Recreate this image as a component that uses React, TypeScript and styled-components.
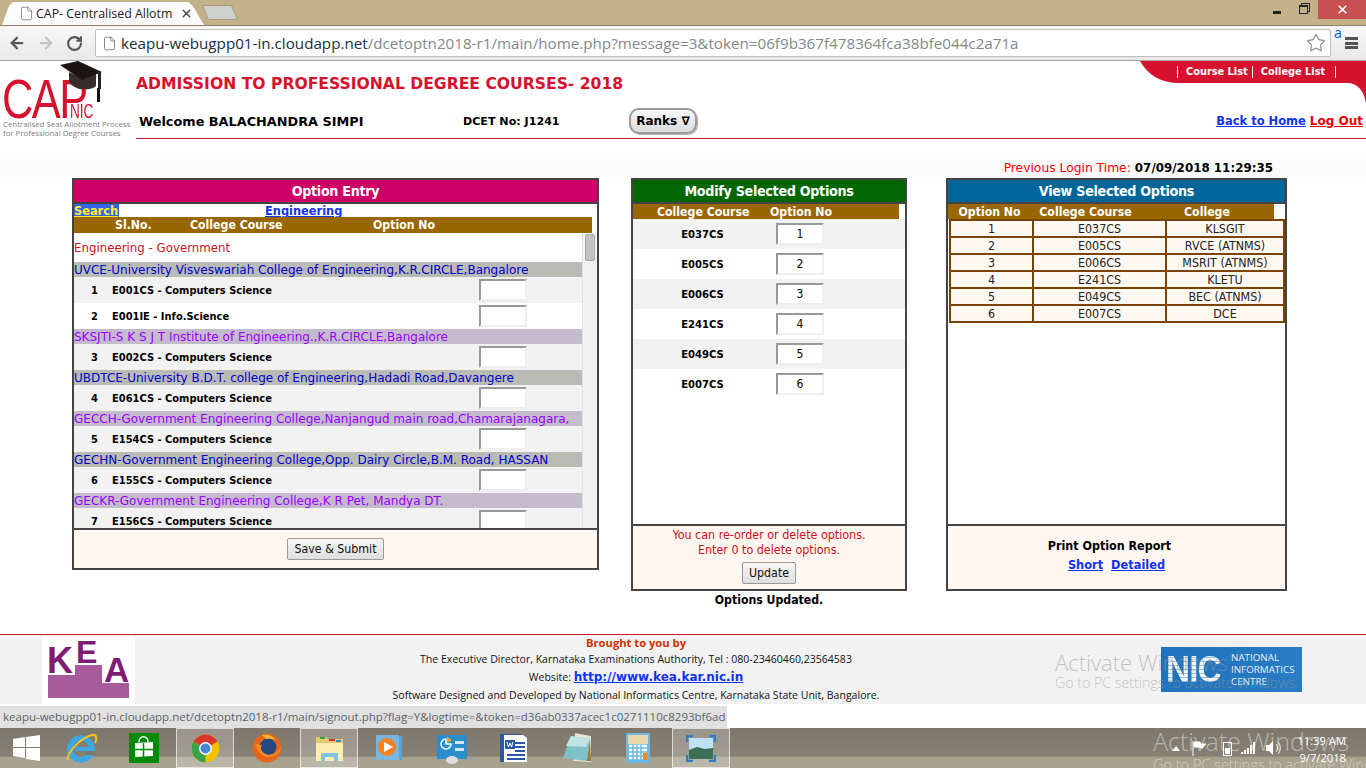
import React from 'react';
import styled, { createGlobalStyle } from 'styled-components';
import { ArrowLeft, ArrowRight, File, RotateCw, Star, X } from 'lucide-react';

const VERDANA = '"DejaVu Sans", Verdana, sans-serif';
const TAHOMA = '"DejaVu Sans Condensed", "DejaVu Sans", sans-serif';
const SEGOE = '"Open Sans", "Noto Sans", sans-serif';
const BROWN = '#996600';

const GlobalStyle = createGlobalStyle`
  html, body { margin: 0; padding: 0; background: #fff; }
  body { font-family: ${VERDANA}; overflow: hidden; }
  * { box-sizing: border-box; }
`;

const Screen = styled.div`
  width: 1366px;
  height: 768px;
  display: flex;
  flex-direction: column;
  overflow: hidden;
  position: relative;
`;

/* browser chrome */
const TabStrip = styled.div`
  height: 25px;
  background: #c2b189;
  display: flex;
  align-items: flex-end;
  padding-left: 2px;
  position: relative;
`;
const ActiveTab = styled.div`
  width: 202px;
  height: 23px;
  background: linear-gradient(#fff, #f8f8f8);
  clip-path: polygon(0 100%, 7px 4px, 11px 0, 186px 0, 191px 4px, 202px 100%);
  display: flex;
  align-items: center;
  gap: 2px;
  padding-left: 17px;
  font: 12.4px ${SEGOE};
  color: #222;
`;
const TabTitle = styled.span`
  width: 136px;
  white-space: nowrap;
  overflow: hidden;
  color: #1c1c1c;
  margin-right: 6px;
`;
const NewTab = styled.div`
  width: 30px;
  height: 15px;
  margin: 0 0 5px 1px;
  background: #ced0cc;
  border: 1px solid #a89c7e;
  border-radius: 2px;
  transform: skewX(22deg);
`;
const WindowControls = styled.div`
  margin-left: auto;
  align-self: flex-start;
  display: flex;
  align-items: center;
  height: 19px;
`;
const Minimize = styled.div`
  width: 8px;
  height: 3px;
  background: #222;
  margin: 6px 18px 0 0;
`;
const Restore = styled.div`
  width: 9px;
  height: 9px;
  border: 1px solid #222;
  border-top-width: 2px;
  margin: 0 10px 0 0;
  box-shadow: 2px -2px 0 -1px #c2b189, 2px -2px 0 0 #222;
`;
const CloseBox = styled.div`
  width: 48px;
  height: 19px;
  background: #c75050;
  color: #fff;
  display: flex;
  align-items: center;
  justify-content: center;
`;
const Toolbar = styled.div`
  height: 36px;
  background: linear-gradient(#f7f7f7, #e9e9e9);
  border-top: 1px solid #8f8367;
  border-bottom: 1px solid #a8a8a8;
  display: flex;
  align-items: center;
  padding-left: 2px;
`;
const NavButton = styled.div<{ $off?: boolean }>`
  width: 29px;
  display: flex;
  justify-content: center;
  color: ${p => (p.$off ? '#c4c4c4' : '#555')};
`;
const Omnibox = styled.div`
  width: 1236px;
  height: 28px;
  margin-left: 6px;
  background: #fff;
  border: 1px solid #bdbdbd;
  border-radius: 2px;
  display: flex;
  align-items: center;
  padding: 0 4px 0 6px;
  gap: 4px;
  font: 15.2px ${SEGOE};
  color: #83898c;
  white-space: nowrap;
`;
const Host = styled.span`
  color: #20303a;
`;
const UrlText = styled.span`
  flex: 1;
`;
const MenuWrap = styled.div`
  position: relative;
  flex: 1;
  height: 100%;
`;
const ExtensionA = styled.span`
  position: absolute;
  left: 3px;
  top: -3px;
  font: 14px ${SEGOE};
  color: #2255dd;
`;
const MenuBars = styled.div`
  position: absolute;
  left: 14px;
  top: 11px;
  width: 13px;
  height: 12px;
  border-top: 3px solid #555;
  border-bottom: 3px solid #555;
  &::after {
    content: '';
    display: block;
    height: 3px;
    margin-top: 1.5px;
    background: #555;
  }
`;

/* page header */
const Page = styled.div`
  flex: 1;
  min-height: 0;
  display: flex;
  flex-direction: column;
  position: relative;
`;
const PageHeader = styled.header`
  height: 79px;
  display: flex;
  position: relative;
  flex: none;
`;
const Logo = styled.div`
  width: 136px;
  position: relative;
  flex: none;
`;
const LogoCap = styled.span`
  position: absolute;
  left: 2px;
  top: 9px;
  font: 55px/58px "Liberation Sans", sans-serif;
  color: #d6122e;
  transform: scaleX(0.79);
  transform-origin: left top;
  letter-spacing: -2px;
`;
const LogoNic = styled.span`
  position: absolute;
  left: 70px;
  top: 40px;
  font: 20px/20px "Liberation Sans", sans-serif;
  color: #d6122e;
  transform: scaleX(0.68);
  transform-origin: left top;
`;
const LogoLine = styled.div<{ $top: number }>`
  position: absolute;
  left: 3px;
  font: 7.85px/9px ${SEGOE};
  color: #808080;
  white-space: nowrap;
  top: ${p => p.$top}px;
`;
const LogoHat = styled.svg`
  position: absolute;
  left: 58px;
  top: 0;
`;
const HeaderMain = styled.div`
  flex: 1;
  display: flex;
  flex-direction: column;
  border-bottom: 1px solid #d6122e;
  margin-bottom: 1px;
`;
const PageTitle = styled.h1`
  margin: 0;
  padding-top: 13px;
  height: 45px;
  font: bold 15.6px/20px ${VERDANA};
  color: #d6122e;
  white-space: nowrap;
`;
const InfoRow = styled.div`
  display: flex;
  align-items: center;
  height: 30px;
  padding-left: 3px;
`;
const Welcome = styled.div`
  width: 324px;
  font: bold 12.85px ${VERDANA};
  color: #000;
  white-space: nowrap;
`;
const Dcet = styled.div`
  width: 166px;
  font: bold 11.1px ${VERDANA};
  color: #000;
  white-space: nowrap;
`;
const RanksButton = styled.button`
  width: 68px;
  height: 26px;
  border: 2px solid #999;
  border-radius: 10px;
  background: linear-gradient(#f8f8f8, #dcdcdc);
  font: bold 12px ${VERDANA};
  color: #000;
  padding: 0;
  box-shadow: 1px 1px 1px #aaa;
`;
const RightLinks = styled.div`
  margin-left: auto;
  padding-right: 3px;
  display: flex;
  align-items: baseline;
  gap: 4px;
`;
const HomeLink = styled.a`
  font: bold 11.5px ${VERDANA};
  color: #1133ee;
  text-decoration: underline;
`;
const LogoutLink = styled.a`
  font: bold 12px ${VERDANA};
  color: #ee0000;
  text-decoration: underline;
`;
const RedTab = styled.div`
  position: absolute;
  right: 0;
  top: 0;
  width: 226px;
  height: 42px;
  display: flex;
  align-items: flex-start;
  padding: 5px 0 0 37px;
`;
const RedTabShape = styled.svg`
  position: absolute;
  inset: 0;
`;
const RedTabLink = styled.span`
  position: relative;
  height: 12px;
  padding: 0 4px 0 8px;
  border-left: 1px solid #fff;
  font: bold 10.9px/12px ${TAHOMA};
  color: #fff;
  white-space: nowrap;
  &:last-child {
    border-right: 1px solid #fff;
    padding-right: 10px;
  }
`;

const LoginBand = styled.div`
  margin-top: 19px;
  height: 18px;
  flex: none;
  background: #fbfbfb;
  display: flex;
  justify-content: flex-end;
  align-items: center;
  padding: 0 93px 1px 0;
  gap: 4px;
  font: 12.3px ${VERDANA};
  color: #f00;
  white-space: nowrap;
`;
const LoginTime = styled.b`
  color: #000;
  font-size: 11.9px;
`;

/* panels */
const PanelRow = styled.main`
  flex: none;
  display: flex;
  align-items: flex-start;
  padding: 1px 0 0 72px;
  height: 457px;
`;
const PanelColumn = styled.div<{ $width: number; $gap: number }>`
  width: ${p => p.$width}px;
  margin-right: ${p => p.$gap}px;
  flex: none;
  display: flex;
  flex-direction: column;
`;
const Panel = styled.section<{ $height: number }>`
  height: ${p => p.$height}px;
  border: 2px solid #444;
  display: flex;
  flex-direction: column;
  background: #fff;
`;
const PanelTitle = styled.div<{ $color: string }>`
  height: 24px;
  flex: none;
  background: ${p => p.$color};
  border-bottom: 2px solid #444;
  color: #fff;
  text-align: center;
  font: bold 14.2px/23px ${TAHOMA};
  letter-spacing: -0.3px;
`;
const TabLinks = styled.div`
  height: 13px;
  flex: none;
  display: flex;
  align-items: flex-start;
  gap: 146px;
  font: bold 11.4px/14px ${VERDANA};
`;
const SearchLink = styled.a`
  width: 45px;
  height: 13px;
  background: #3366ee;
  color: #ffee22;
  text-decoration: underline;
`;
const CategoryLink = styled.a`
  color: #1133ee;
  text-decoration: underline;
`;
const HeadRow = styled.div<{ $columns: string; $pad: number; $right: number; $height: number }>`
  flex: none;
  height: ${p => p.$height}px;
  margin-right: ${p => p.$right}px;
  background: ${BROWN};
  color: #fff;
  display: grid;
  grid-template-columns: ${p => p.$columns};
  padding-left: ${p => p.$pad}px;
  font: bold 12.2px/${p => p.$height + 1}px ${TAHOMA};
  white-space: nowrap;
`;
const HeadCenter = styled.span`
  text-align: center;
`;
const ListArea = styled.div`
  flex: 1;
  min-height: 0;
  display: flex;
`;
const ListScroll = styled.div`
  width: 508px;
  overflow: hidden;
`;
const Scrollbar = styled.div`
  width: 15px;
  background: #f1f1f1;
  border-left: 1px solid #e2e2e2;
  padding: 1px 2px;
`;
const ScrollThumb = styled.div`
  height: 27px;
  background: #c4c4c4;
  border: 1px solid #aaa;
  border-radius: 2px;
`;
const CategoryTitle = styled.div`
  height: 29px;
  font: 11.8px/31px ${VERDANA};
  color: #cc1122;
`;
const CollegeRow = styled.div<{ $alt: boolean }>`
  height: 15px;
  background: ${p => (p.$alt ? '#c4bccc' : '#bbbbb6')};
  color: ${p => (p.$alt ? '#9900ff' : '#0000cc')};
  font: 12px/17px ${VERDANA};
  white-space: nowrap;
  overflow: hidden;
`;
const CourseRow = styled.div<{ $alt: boolean }>`
  height: 26px;
  background: ${p => (p.$alt ? '#fff' : '#f2f2f2')};
  display: grid;
  grid-template-columns: 38px 367px 48px;
  align-items: center;
  font: bold 11px ${TAHOMA};
  color: #000;
`;
const CourseNumber = styled.span`
  text-align: right;
  padding-right: 14px;
`;
const OptionInput = styled.input`
  width: 48px;
  height: 22px;
  padding: 0;
  border-style: solid;
  border-width: 2px;
  border-color: #999 #eee #eee #999;
  background: #fff;
  text-align: center;
  font: 12px ${TAHOMA};
  color: #000;
  outline: none;
`;
const PanelFooter = styled.div<{ $height: number }>`
  height: ${p => p.$height}px;
  flex: none;
  border-top: 2px solid #444;
  background: #fff7f0;
  display: flex;
  flex-direction: column;
  align-items: center;
`;
const SubmitButton = styled.button<{ $top: number }>`
  margin-top: ${p => p.$top}px;
  height: 22px;
  padding: 0 6px;
  border: 1px solid #999;
  border-radius: 2px;
  background: linear-gradient(#f6f6f6, #dedede);
  font: 12.3px ${TAHOMA};
  color: #111;
`;
const ModifyRow = styled.div<{ $alt: boolean }>`
  height: 30px;
  background: ${p => (p.$alt ? '#fff' : '#f2f2f2')};
  display: grid;
  grid-template-columns: 143px 48px;
  align-items: center;
  font: bold 11.2px ${TAHOMA};
  color: #000;
`;
const ModifyCode = styled.span`
  text-align: center;
  padding-right: 4px;
`;
const HelpText = styled.div`
  margin-top: 1px;
  text-align: center;
  font: 12.4px/15px ${TAHOMA};
  color: #cc1122;
`;
const UpdatedNote = styled.div`
  margin-top: 1px;
  text-align: center;
  font: bold 12.2px/16px ${TAHOMA};
  color: #000;
`;
const ViewTable = styled.div`
  margin: 0 0 0 1px;
  padding: 2px;
  display: grid;
  grid-template-columns: 81px 131px 116px;
  gap: 2px;
  background: #7a4400;
  flex: none;
  width: 336px;
`;
const ViewCell = styled.div`
  height: 15px;
  background: #fff9f2;
  text-align: center;
  font: 12.4px/15px ${TAHOMA};
  color: #222;
`;
const Spacer = styled.div`
  flex: 1;
`;
const PrintTitle = styled.div`
  margin: 12px 14px 0 0;
  font: bold 12.4px/16px ${TAHOMA};
  color: #000;
`;
const PrintLinks = styled.div`
  margin-top: 3px;
  display: flex;
  gap: 8px;
  font: bold 11.4px/16px ${VERDANA};
`;

/* footer */
const PageFooter = styled.footer`
  height: 70px;
  flex: none;
  border-top: 1px solid #d6122e;
  background: #f2f2f2;
  display: grid;
  grid-template-columns: 135px 1002px 229px;
  position: relative;
`;
const KeaLogo = styled.div`
  margin: 2px 0 0 42px;
  width: 93px;
  height: 67px;
  background: #fff;
  position: relative;
  overflow: hidden;
`;
const KeaLetter = styled.span<{ $left: number; $top: number; $size: number }>`
  position: absolute;
  left: ${p => p.$left}px;
  top: ${p => p.$top}px;
  font: bold ${p => p.$size}px/${p => p.$size}px "Liberation Sans", sans-serif;
  color: #7f1d75;
`;
const KeaSteps = styled.svg`
  position: absolute;
  left: 6px;
  top: 28px;
`;
const FooterText = styled.div`
  text-align: center;
  font: 10.55px/18.2px ${SEGOE};
  color: #111;
  white-space: nowrap;
`;
const BroughtBy = styled.div`
  font: bold 11.2px/15px ${SEGOE};
  color: #cc3300;
`;
const FooterLink = styled.a`
  font: bold 12px ${VERDANA};
  color: #1133ee;
  text-decoration: underline;
`;
const NicLogo = styled.div`
  margin: 12px 0 0 24px;
  width: 141px;
  height: 45px;
  background: linear-gradient(100deg, #1f72bb, #2a7cc4);
  display: flex;
  align-items: center;
  padding-left: 5px;
`;
const NicMark = styled.span`
  flex: none;
  width: 65px;
  font: 900 37px/40px "Liberation Sans", sans-serif;
  letter-spacing: -1px;
  background: repeating-linear-gradient(#f2f5f8 0 3px, #9fc2e2 3px 4px);
  -webkit-background-clip: text;
  background-clip: text;
  color: transparent;
  transform: scaleX(0.9);
  transform-origin: left center;
`;
const NicName = styled.span`
  font: 9.8px/12px ${SEGOE};
  color: #e8f0f8;
  white-space: nowrap;
`;
const Watermark = styled.div`
  position: absolute;
  left: 1055px;
  top: 13px;
  color: rgba(150, 150, 150, 0.55);
  font: 300 22px/28px ${SEGOE};
  white-space: nowrap;
  pointer-events: none;
`;
const WatermarkSub = styled.div`
  font-size: 14.2px;
  line-height: 18px;
  margin-top: -2px;
`;
const StatusSpace = styled.div`
  height: 24px;
  flex: none;
  background: #fff;
  padding-top: 2px;
`;
const StatusBubble = styled.div`
  width: 727px;
  height: 22px;
  background: #e1e1e1;
  padding-left: 3px;
  font: 11.5px/22px ${SEGOE};
  color: #59636a;
  white-space: nowrap;
  overflow: hidden;
`;

/* taskbar */
const Taskbar = styled.div`
  height: 40px;
  flex: none;
  background: linear-gradient(#7d786b 0, #868174 70%, #a7a28f 74%, #a9a491 100%);
  display: flex;
  align-items: stretch;
  position: relative;
  overflow: hidden;
`;
const TaskSlot = styled.div<{ $active?: boolean; $width: number; $before?: number }>`
  width: ${p => p.$width}px;
  margin-left: ${p => p.$before ?? 0}px;
  flex: none;
  display: flex;
  align-items: center;
  justify-content: center;
  ${p => p.$active && 'background: rgba(255,255,255,0.22); border: 1px solid rgba(255,255,255,0.65);'}
`;
const TaskWatermark = styled.div`
  position: absolute;
  left: 1153px;
  top: -1px;
  font: 300 25px/28px ${SEGOE};
  color: rgba(255, 255, 255, 0.45);
  white-space: nowrap;
`;
const WatermarkSmall = styled.div`
  font-size: 14.5px;
  line-height: 18px;
  margin-top: 1px;
`;
const Tray = styled.div`
  position: absolute;
  left: 1172px;
  top: 6px;
  height: 28px;
  display: flex;
  align-items: center;
`;
const Clock = styled.div`
  position: absolute;
  right: 20px;
  top: 5px;
  text-align: right;
  font: 11.2px/16.5px ${SEGOE};
  color: #fff;
`;
const TrayIcon = styled.svg<{ $after: number }>`
  margin-right: ${p => p.$after}px;
  flex: none;
`;

const courses: Array<{ college?: string; number: number; course: string }> = [
  { college: 'UVCE-University Visveswariah College of Engineering,K.R.CIRCLE,Bangalore', number: 1, course: 'E001CS - Computers Science' },
  { number: 2, course: 'E001IE - Info.Science' },
  { college: 'SKSJTI-S K S J T Institute of Engineering.,K.R.CIRCLE,Bangalore', number: 3, course: 'E002CS - Computers Science' },
  { college: 'UBDTCE-University B.D.T. college of Engineering,Hadadi Road,Davangere', number: 4, course: 'E061CS - Computers Science' },
  { college: 'GECCH-Government Engineering College,Nanjangud main road,Chamarajanagara,', number: 5, course: 'E154CS - Computers Science' },
  { college: 'GECHN-Government Engineering College,Opp. Dairy Circle,B.M. Road, HASSAN', number: 6, course: 'E155CS - Computers Science' },
  { college: 'GECKR-Government Engineering College,K R Pet, Mandya DT.', number: 7, course: 'E156CS - Computers Science' },
];

const selected = [
  ['E037CS', 'KLSGIT'],
  ['E005CS', 'RVCE (ATNMS)'],
  ['E006CS', 'MSRIT (ATNMS)'],
  ['E241CS', 'KLETU'],
  ['E049CS', 'BEC (ATNMS)'],
  ['E007CS', 'DCE'],
];

const OptionEntry: React.FC = () => {
  let collegeIndex = -1;
  return (
    <Panel $height={392}>
      <PanelTitle $color="#cc0066">Option Entry</PanelTitle>
      <TabLinks>
        <SearchLink>Search</SearchLink>
        <CategoryLink>Engineering</CategoryLink>
      </TabLinks>
      <HeadRow $columns="75px 183px auto" $pad={41} $right={5} $height={16}>
        <span>Sl.No.</span>
        <span>College Course</span>
        <span>Option No</span>
      </HeadRow>
      <ListArea>
        <ListScroll>
          <CategoryTitle>Engineering - Government</CategoryTitle>
          {courses.map(row => {
            if (row.college) collegeIndex++;
            return (
              <React.Fragment key={row.number}>
                {row.college ? <CollegeRow $alt={collegeIndex % 2 === 1}>{row.college}</CollegeRow> : null}
                <CourseRow $alt={row.number === 2}>
                  <CourseNumber>{row.number}</CourseNumber>
                  <span>{row.course}</span>
                  <OptionInput readOnly />
                </CourseRow>
              </React.Fragment>
            );
          })}
        </ListScroll>
        <Scrollbar><ScrollThumb /></Scrollbar>
      </ListArea>
      <PanelFooter $height={40}>
        <SubmitButton $top={8}>Save &amp; Submit</SubmitButton>
      </PanelFooter>
    </Panel>
  );
};

const ModifyOptions: React.FC = () => (
  <>
    <Panel $height={413}>
      <PanelTitle $color="#006600">Modify Selected Options</PanelTitle>
      <HeadRow $columns="113px auto" $pad={24} $right={6} $height={15}>
        <span>College Course</span>
        <span>Option No</span>
      </HeadRow>
      {selected.map(([code], i) => (
        <ModifyRow key={code} $alt={i % 2 === 1}>
          <ModifyCode>{code}</ModifyCode>
          <OptionInput readOnly value={i + 1} />
        </ModifyRow>
      ))}
      <Spacer />
      <PanelFooter $height={65}>
        <HelpText>You can re-order or delete options.<br />Enter 0 to delete options.</HelpText>
        <SubmitButton $top={5}>Update</SubmitButton>
      </PanelFooter>
    </Panel>
    <UpdatedNote>Options Updated.</UpdatedNote>
  </>
);

const ViewOptions: React.FC = () => (
  <Panel $height={413}>
    <PanelTitle $color="#006699">View Selected Options</PanelTitle>
    <HeadRow $columns="83px 109px 134px" $pad={0} $right={11} $height={15}>
      <HeadCenter>Option No</HeadCenter>
      <HeadCenter>College Course</HeadCenter>
      <HeadCenter>College</HeadCenter>
    </HeadRow>
    <ViewTable>
      {selected.map(([code, college], i) => (
        <React.Fragment key={code}>
          <ViewCell>{i + 1}</ViewCell>
          <ViewCell>{code}</ViewCell>
          <ViewCell>{college}</ViewCell>
        </React.Fragment>
      ))}
    </ViewTable>
    <Spacer />
    <PanelFooter $height={65}>
      <PrintTitle>Print Option Report</PrintTitle>
      <PrintLinks>
        <CategoryLink>Short</CategoryLink>
        <CategoryLink>Detailed</CategoryLink>
      </PrintLinks>
    </PanelFooter>
  </Panel>
);

const WindowsIcon = () => (
  <svg width="27" height="26" viewBox="0 0 27 26">
    <path d="M0 4l12-2v10H0zM13 2l14-2v12H13zM0 13h12v10L0 21zM13 13h14v13l-14-2z" fill="#fff" />
  </svg>
);
const IeIcon = () => (
  <svg width="32" height="32" viewBox="0 0 32 32">
    <circle cx="15" cy="17" r="11" fill="none" stroke="#3aa8e6" strokeWidth="5.5" />
    <rect x="9" y="15" width="14" height="4" fill="#3aa8e6" />
    <rect x="20" y="19" width="9" height="4" fill="#7d786b" />
    <path d="M2 28C0 22 14 6 26 3c5-1 5 4 3 8" fill="none" stroke="#f0c419" strokeWidth="2" />
  </svg>
);
const StoreIcon = () => (
  <svg width="30" height="30" viewBox="0 0 30 30">
    <rect width="30" height="30" fill="#008a00" />
    <path d="M6 10l18-1v14l-18 1z" fill="#fff" />
    <path d="M10 9c0-7 9-7 9 0" fill="none" stroke="#fff" strokeWidth="1.5" />
    <path d="M14.5 10v14M6 16.5h18" stroke="#008a00" strokeWidth="1.5" />
  </svg>
);
const ChromeIcon = () => (
  <svg width="29" height="29" viewBox="0 0 29 29">
    <circle cx="14.5" cy="14.5" r="14" fill="#f2c200" />
    <path d="M14.5 14.5L2.38 7.5A14 14 0 0 1 26.62 7.5z" fill="#d9362b" />
    <path d="M14.5 14.5V28.5A14 14 0 0 1 2.38 7.5z" fill="#3ba14a" />
    <circle cx="14.5" cy="14.5" r="6.5" fill="#fff" />
    <circle cx="14.5" cy="14.5" r="5" fill="#4a86d8" />
  </svg>
);
const FirefoxIcon = () => (
  <svg width="30" height="30" viewBox="0 0 30 30">
    <circle cx="15" cy="15" r="14.5" fill="#e8641b" />
    <circle cx="16" cy="14" r="8.5" fill="#27477f" />
    <path d="M3 10c2 12 12 17 21 12 4-2 5-7 5-9-3 8-11 11-17 7-3-2-4-5-2-8-3 0-5-1-7-2z" fill="#f08a24" />
    <path d="M10 2c5-1 11 0 14 6-3-3-7-3-10-2z" fill="#f5b335" />
  </svg>
);
const FolderIcon = () => (
  <svg width="29" height="29" viewBox="0 0 29 29">
    <path d="M1 3h10l2 2h15v22H1z" fill="#e6c870" />
    <rect x="5" y="3" width="5" height="2" fill="#3ba14a" />
    <rect x="14" y="5" width="6" height="2" fill="#c53b2a" />
    <rect x="21" y="6" width="5" height="2" fill="#3a86d0" />
    <path d="M1 9h27v18H1z" fill="#fbeeb0" />
    <path d="M6 27v-8h17v8h-4v-4H10v4z" fill="#7fc4e8" />
  </svg>
);
const MediaIcon = () => (
  <svg width="28" height="28" viewBox="0 0 28 28">
    <rect x="4" y="2" width="23" height="24" fill="#5aa3d8" />
    <rect x="1" y="1" width="23" height="25" fill="#7ab5de" />
    <circle cx="12" cy="13" r="9" fill="#f58220" />
    <path d="M9 8l9 5-9 5z" fill="#fff" />
  </svg>
);
const PanelIcon = () => (
  <svg width="32" height="32" viewBox="0 0 32 32">
    <rect x="1" y="3" width="30" height="24" fill="#2a8ecb" />
    <path d="M10 7a5 5 0 1 0 5 5h-5z" fill="none" stroke="#fff" strokeWidth="1.5" />
    <path d="M11 5l5 3-5 3z" fill="#f5a623" />
    <rect x="19" y="9" width="9" height="3" fill="#cfe6f5" />
    <rect x="19" y="16" width="9" height="3" fill="#cfe6f5" />
    <ellipse cx="16" cy="28" rx="6" ry="4" fill="#ddd" />
  </svg>
);
const WordIcon = () => (
  <svg width="32" height="32" viewBox="0 0 32 32">
    <path d="M3 2h22v28H3z" fill="#2c56a8" />
    <path d="M7 3h19l4 3v24H7z" fill="#fff" />
    <path d="M18 11h10M18 15h10M18 19h10M10 23h18M10 27h18" stroke="#2c56a8" strokeWidth="2" />
    <path d="M8 8h10v9H8z" fill="#2c56a8" />
    <path d="M10 10l1.5 5 1.5-4 1.5 4 1.5-5" fill="none" stroke="#fff" strokeWidth="1" />
  </svg>
);
const NotepadIcon = () => (
  <svg width="32" height="32" viewBox="0 0 32 32">
    <path d="M14 1l16 3 0 26-18-1z" fill="#e4e4d8" />
    <path d="M10 4l19 3-3 22L2 26z" fill="#7fc1c9" />
    <path d="M29 7l1 22-4 0z" fill="#9a7a3a" />
    <path d="M10 4l19 3-4 8L5 14z" fill="#bfe2e2" />
  </svg>
);
const CalcIcon = () => (
  <svg width="24" height="30" viewBox="0 0 24 30">
    <rect width="24" height="30" rx="1" fill="#6fb6e0" />
    <rect x="2" y="2" width="20" height="9" fill="#e8d8a8" />
    <path d="M3 13h18M3 17h18M3 21h18M3 25h18" stroke="#fff" strokeWidth="2.5" />
    <path d="M7 12v15M11 12v15M15 12v15" stroke="#6fb6e0" strokeWidth="1.5" />
    <rect x="17" y="20" width="4" height="7" fill="#f08a24" />
  </svg>
);
const PhotoIcon = () => (
  <svg width="30" height="27" viewBox="0 0 30 27">
    <rect x="3" y="3" width="24" height="21" fill="#bfe0f5" />
    <path d="M3 15l8-3 8 2 8-1v11H3z" fill="#3c6e58" />
    <path d="M1 7V1h6M23 1h6v6M29 20v6h-6M7 26H1v-6" fill="none" stroke="#2f7cc6" strokeWidth="2.5" />
  </svg>
);

const App: React.FC = () => (
  <Screen>
    <GlobalStyle />
    <TabStrip>
      <ActiveTab>
        <File size={15} color="#888" strokeWidth={1.4} />
        <TabTitle>CAP- Centralised Allotment</TabTitle>
        <X size={13} color="#555" strokeWidth={3} />
      </ActiveTab>
      <NewTab />
      <WindowControls>
        <Minimize />
        <Restore />
        <CloseBox><X size={13} strokeWidth={3} /></CloseBox>
      </WindowControls>
    </TabStrip>
    <Toolbar>
      <NavButton><ArrowLeft size={18} strokeWidth={3} /></NavButton>
      <NavButton $off><ArrowRight size={18} strokeWidth={3} /></NavButton>
      <NavButton><RotateCw size={17} strokeWidth={3} /></NavButton>
      <Omnibox>
        <File size={15} color="#777" strokeWidth={1.4} />
        <UrlText>
          <Host>keapu-webugpp01-in.cloudapp.net</Host>/dcetoptn2018-r1/main/home.php?message=3&amp;token=06f9b367f478364fca38bfe044c2a71a
        </UrlText>
        <Star size={20} color="#8f8f8f" strokeWidth={1.5} />
      </Omnibox>
      <MenuWrap>
        <ExtensionA>a</ExtensionA>
        <MenuBars />
      </MenuWrap>
    </Toolbar>
    <Page>
      <PageHeader>
        <Logo>
          <LogoCap>CAP</LogoCap>
          <LogoNic>NIC</LogoNic>
          <LogoHat width="50" height="44" viewBox="0 0 50 44">
            <path d="M11 11l15 7 12-6v13c-5 5-22 5-27-4z" fill="#3a2e2c" />
            <path d="M2 4L20 0l24 11-20 8z" fill="#1c1412" />
            <path d="M43 11h-3v17h3z" fill="#2a2220" />
            <rect x="39" y="27" width="3" height="14" fill="#111" />
          </LogoHat>
          <LogoLine $top={59}>Centralised Seat Allotment Process</LogoLine>
          <LogoLine $top={68}>for Professional Degree Courses</LogoLine>
        </Logo>
        <HeaderMain>
          <PageTitle>ADMISSION TO PROFESSIONAL DEGREE COURSES- 2018</PageTitle>
          <InfoRow>
            <Welcome>Welcome BALACHANDRA SIMPI</Welcome>
            <Dcet>DCET No: J1241</Dcet>
            <RanksButton>Ranks ∇</RanksButton>
            <RightLinks>
              <HomeLink>Back to Home</HomeLink>
              <LogoutLink>Log Out</LogoutLink>
            </RightLinks>
          </InfoRow>
        </HeaderMain>
        <RedTab>
          <RedTabShape width="226" height="42" viewBox="0 0 226 42">
            <path d="M0 0h226v42c-2-12-8-20-19-20H40C20 22 8 14 0 0z" fill="#d6122e" />
          </RedTabShape>
          <RedTabLink>Course List</RedTabLink>
          <RedTabLink>College List</RedTabLink>
        </RedTab>
      </PageHeader>
      <LoginBand>
        Previous Login Time:
        <LoginTime>07/09/2018 11:29:35</LoginTime>
      </LoginBand>
      <PanelRow>
        <PanelColumn $width={527} $gap={32}><OptionEntry /></PanelColumn>
        <PanelColumn $width={276} $gap={39}><ModifyOptions /></PanelColumn>
        <PanelColumn $width={341} $gap={0}><ViewOptions /></PanelColumn>
      </PanelRow>
      <PageFooter>
        <KeaLogo>
          <KeaSteps width="81" height="33" viewBox="0 0 81 33">
            <path d="M0 10h27V0h27v18h27v15H0z" fill="#a75a9c" />
          </KeaSteps>
          <KeaLetter $left={5} $top={6} $size={36}>K</KeaLetter>
          <KeaLetter $left={34} $top={-1} $size={32}>E</KeaLetter>
          <KeaLetter $left={62} $top={15} $size={35}>A</KeaLetter>
        </KeaLogo>
        <FooterText>
          <BroughtBy>Brought to you by</BroughtBy>
          The Executive Director, Karnataka Examinations Authority, Tel : 080-23460460,23564583<br />
          Website: <FooterLink>http://www.kea.kar.nic.in</FooterLink><br />
          Software Designed and Developed by National Informatics Centre, Karnataka State Unit, Bangalore.
        </FooterText>
        <NicLogo>
          <NicMark>NIC</NicMark>
          <NicName>NATIONAL<br />INFORMATICS<br />CENTRE</NicName>
        </NicLogo>
        <Watermark>
          Activate Windows
          <WatermarkSub>Go to PC settings to activate Windows.</WatermarkSub>
        </Watermark>
      </PageFooter>
      <StatusSpace>
        <StatusBubble>keapu-webugpp01-in.cloudapp.net/dcetoptn2018-r1/main/signout.php?flag=Y&amp;logtime=&amp;token=d36ab0337acec1c0271110c8293bf6ad</StatusBubble>
      </StatusSpace>
    </Page>
    <Taskbar>
      <TaskSlot $width={52}><WindowsIcon /></TaskSlot>
      <TaskSlot $width={60}><IeIcon /></TaskSlot>
      <TaskSlot $width={64}><StoreIcon /></TaskSlot>
      <TaskSlot $width={58} $active><ChromeIcon /></TaskSlot>
      <TaskSlot $width={66}><FirefoxIcon /></TaskSlot>
      <TaskSlot $width={58} $active><FolderIcon /></TaskSlot>
      <TaskSlot $width={62}><MediaIcon /></TaskSlot>
      <TaskSlot $width={64}><PanelIcon /></TaskSlot>
      <TaskSlot $width={58}><WordIcon /></TaskSlot>
      <TaskSlot $width={70}><NotepadIcon /></TaskSlot>
      <TaskSlot $width={52}><CalcIcon /></TaskSlot>
      <TaskSlot $width={58} $before={8} $active><PhotoIcon /></TaskSlot>
      <TaskWatermark>
        Activate Windows
        <WatermarkSmall>Go to PC settings to activate Windows.</WatermarkSmall>
      </TaskWatermark>
      <Tray>
        <TrayIcon $after={12} width="8" height="5" viewBox="0 0 8 5"><path d="M0 5l4-5 4 5z" fill="#fff" /></TrayIcon>
        <TrayIcon $after={16} width="15" height="15" viewBox="0 0 15 15"><path d="M1 0v15M2 1h6l1 2h5l-3 3 0 1H8L7 6H2z" fill="#fff" stroke="#fff" strokeWidth="1" /></TrayIcon>
        <TrayIcon $after={9} width="9" height="15" viewBox="0 0 9 15"><rect x="0.5" y="1.5" width="8" height="13" fill="none" stroke="#fff" /><rect x="2" y="7" width="5" height="6" fill="#fff" /></TrayIcon>
        <TrayIcon $after={10} width="15" height="12" viewBox="0 0 15 12"><path d="M0 10h2v2H0zM3 8h2v4H3zM6 6h2v6H6zM9 3h2v9H9zM12 0h2v12h-2z" fill="#fff" /></TrayIcon>
        <TrayIcon $after={0} width="15" height="14" viewBox="0 0 15 14"><path d="M0 4h3l4-4v14l-4-4H0z" fill="#fff" /><path d="M10 3c2 2 2 6 0 8M12 1c3 3 3 9 0 12" fill="none" stroke="#fff" /></TrayIcon>
      </Tray>
      <Clock>11:39 AM<br />9/7/2018</Clock>
    </Taskbar>
  </Screen>
);

export default App;
